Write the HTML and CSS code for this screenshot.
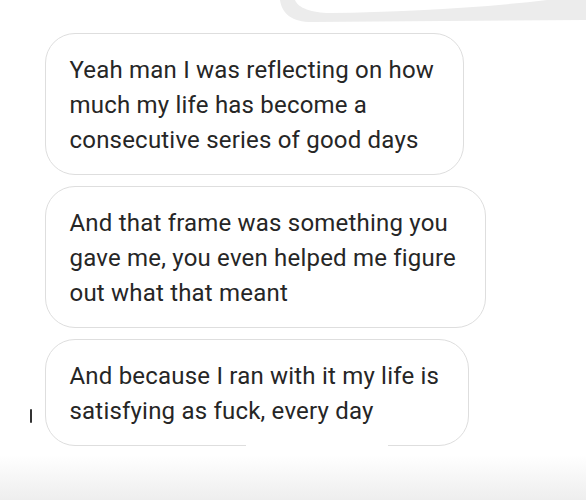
FILE: index.html
```html
<!doctype html>
<html lang="en">
<head>
    <meta charset="utf-8">
    <title>Messages</title>
    <link rel="stylesheet" href="styles.css">
</head>
<body>
    <svg class="prev-bubble" width="586" height="33" viewBox="0 0 586 33">
        <path d="M280 0 C282 14 292 22 312 22 L586 20 L586 0 L547 0 C480 8 400 12 330 13 C312 13 298 8 295 0 Z" fill="#ececec"/>
    </svg>
    <div class="thread">
        <div class="row">
            <div class="gutter"></div>
            <div class="bubble">
                <span class="line">Yeah man I was reflecting on how</span>
                <span class="line">much my life has become a</span>
                <span class="line">consecutive series of good days</span>
            </div>
        </div>
        <div class="row">
            <div class="gutter"></div>
            <div class="bubble">
                <span class="line">And that frame was something you</span>
                <span class="line">gave me, you even helped me figure</span>
                <span class="line">out what that meant</span>
            </div>
        </div>
        <div class="row">
            <div class="gutter"><div class="edge-mark"></div></div>
            <div class="bubble bubble-last">
                <span class="line">And because I ran with it my life is</span>
                <span class="line">satisfying as fuck, every day</span>
            </div>
        </div>
    </div>
</body>
</html>
```

FILE: styles.css
```css
html {
    height: 500px;
    background: linear-gradient(to bottom, #fff 0, #fff 455px, #eeeeee 500px);
}

body {
    margin: 0;
    width: 586px;
    height: 500px;
    overflow: hidden;
    font-family: Roboto, "Liberation Sans", sans-serif;
    color: #262626;
}

.prev-bubble {
    display: block;
}

.thread {
    display: flex;
    flex-direction: column;
    gap: 11px;
    padding-left: 28px;
}

.row {
    display: flex;
}

.gutter {
    width: 17px;
    flex-shrink: 0;
    display: flex;
    flex-direction: column;
    justify-content: flex-end;
}

.edge-mark {
    width: 2px;
    height: 14px;
    margin-bottom: 23px;
    margin-left: 1.5px;
    background: #333;
    border-radius: 2px;
}

.bubble {
    position: relative;
    border: 1.5px solid #dedede;
    border-radius: 30px;
    padding: 18.5px 29px 16.5px 23.5px;
    font-size: 24px;
    line-height: 35px;
    letter-spacing: 0.2px;
    background: #fff;
}

.line {
    display: block;
    white-space: nowrap;
}

/* gap in the bottom border of the last bubble */
.bubble-last::after {
    content: "";
    position: absolute;
    left: 200px;
    width: 142px;
    bottom: -3px;
    height: 5px;
    background: #fff;
}
```
